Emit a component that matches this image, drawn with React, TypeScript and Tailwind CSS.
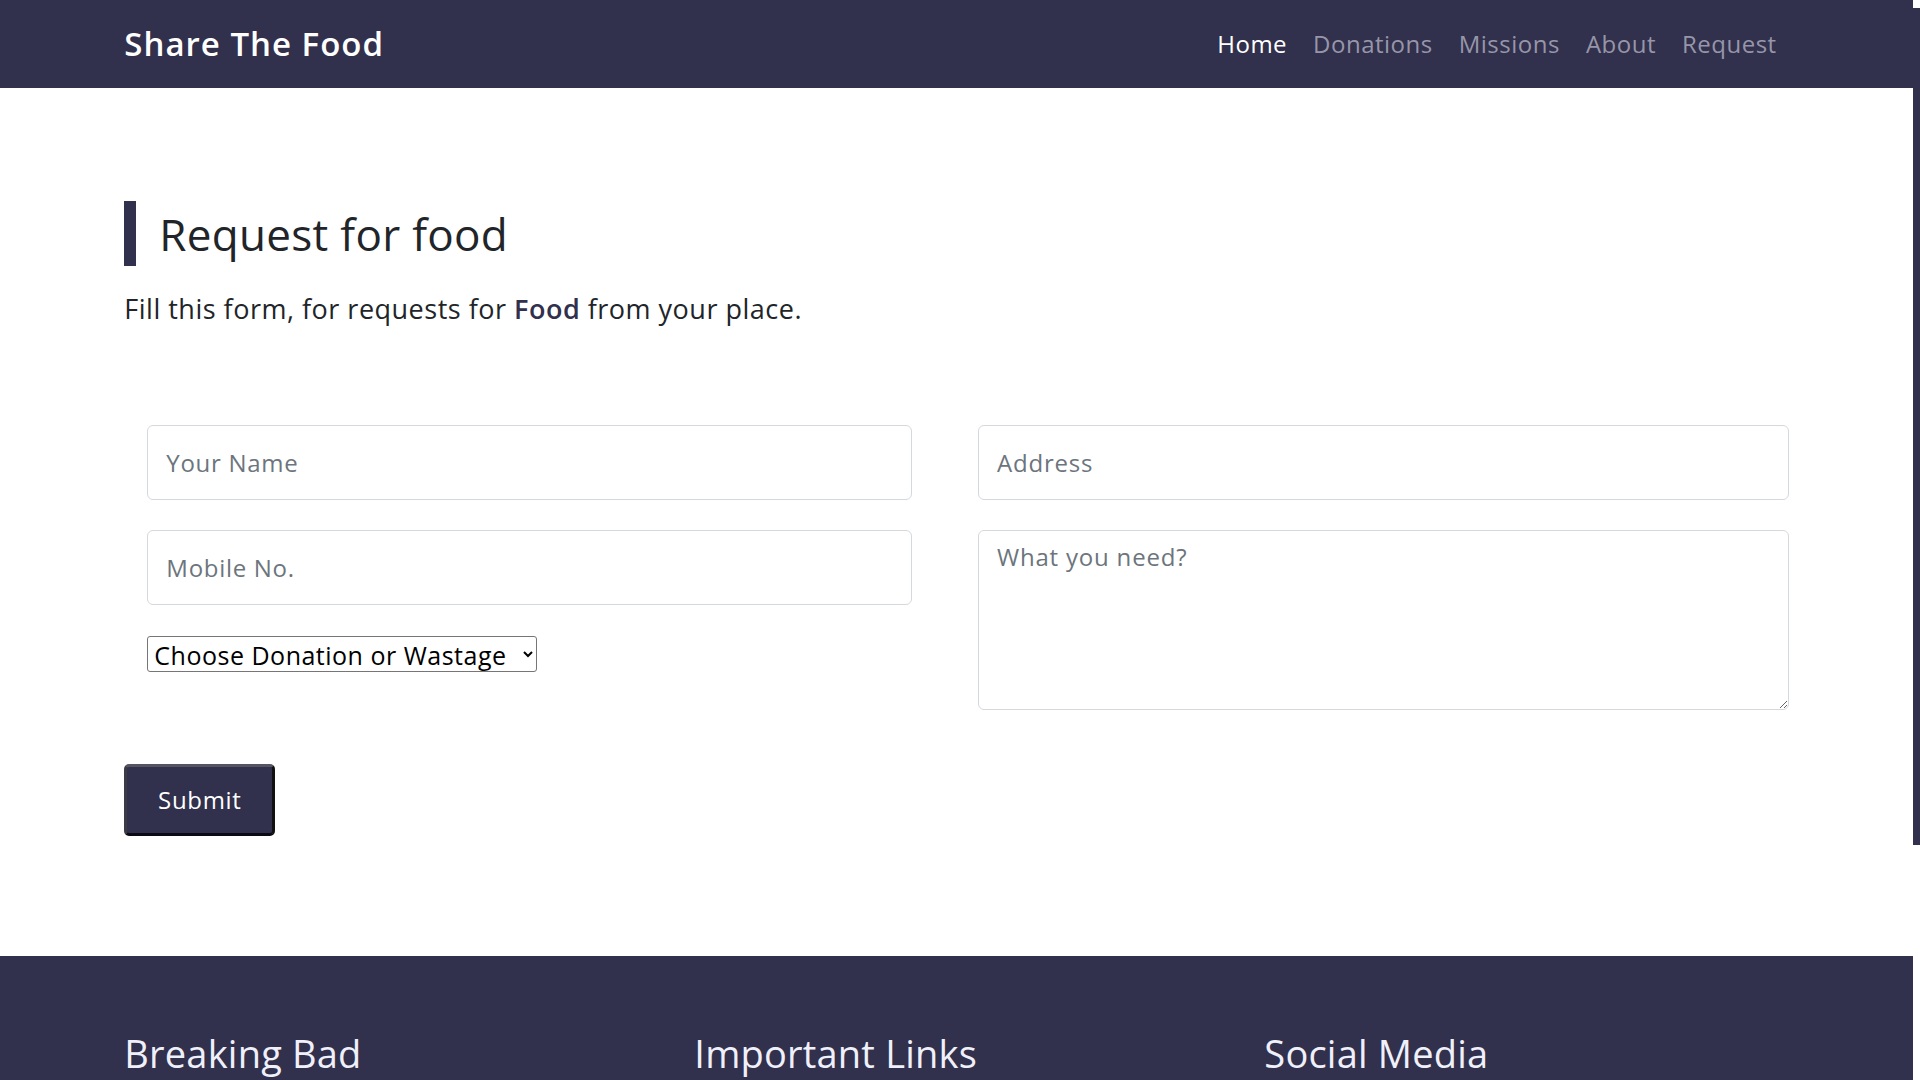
export default function App() {
  const font = { fontFamily: '"Open Sans", "Liberation Sans", sans-serif' };
  return (
    <div className="flex h-[1080px] overflow-hidden bg-white" style={font}>
      <div className="flex-1 min-w-0">
        {/* Navbar */}
        <header className="h-[88px] bg-[#31304d]">
          <div className="mx-auto flex h-full w-[87%] items-center justify-between">
            <span className="text-[33px] font-semibold tracking-[1px] text-white">Share The Food</span>
            <nav className="mr-[12px] flex items-center gap-[26px] text-[24px] tracking-[0.5px]">
              <a className="text-white">Home</a>
              <a className="text-[#9796a8]">Donations</a>
              <a className="text-[#9796a8]">Missions</a>
              <a className="text-[#9796a8]">About</a>
              <a className="text-[#9796a8]">Request</a>
            </nav>
          </div>
        </header>

        {/* Request form */}
        <main className="mx-auto w-[87%] pt-[113px] pb-[120px]">
          <div className="flex h-[65px] items-center border-l-[12px] border-[#31304d] pl-[23px]">
            <h1 className="text-[44px] leading-none tracking-[0.3px] text-[#212529]">Request for food</h1>
          </div>
          <p className="mt-[23px] text-[27px] leading-[39px] tracking-[0.5px] text-[#212529]">
            Fill this form, for requests for <b className="font-semibold text-[#31304d]">Food</b> from your place.
          </p>

          <form className="mt-[97px]">
            <div className="flex">
              <div className="ml-[23px] flex w-[765px] flex-col">
                <input
                  className="h-[75px] rounded-md border border-[#d5d8dc] px-[18px] text-[24px] tracking-[0.7px] placeholder:text-[#6c757d]"
                  placeholder="Your Name"
                />
                <input
                  className="mt-[30px] h-[75px] rounded-md border border-[#d5d8dc] px-[18px] text-[24px] tracking-[0.7px] placeholder:text-[#6c757d]"
                  placeholder="Mobile No."
                />
                <div className="mt-[31px]">
                  <select className="h-[36px] w-[390px] rounded-[3px] border border-[#767676] pl-[2px] pr-[6px] text-[25px] tracking-[0.5px] text-black">
                    <option>Choose Donation or Wastage</option>
                  </select>
                </div>
              </div>
              <div className="ml-[66px] flex w-[811px] flex-col">
                <input
                  className="h-[75px] rounded-md border border-[#d5d8dc] px-[18px] text-[24px] tracking-[0.8px] placeholder:text-[#6c757d]"
                  placeholder="Address"
                />
                <textarea
                  className="mt-[30px] h-[180px] rounded-md border border-[#d5d8dc] px-[18px] pt-[8px] text-[24px] leading-[36px] tracking-[0.8px] placeholder:text-[#6c757d]"
                  placeholder="What you need?"
                />
              </div>
            </div>
            <button
              type="button"
              className="mt-[54px] h-[72px] w-[151px] rounded-[5px] border-[3px] border-t-[#555460] border-l-[#3b3b45] border-r-[#111] border-b-[#0a0a12] bg-[#31304d] text-[24px] tracking-[0.7px] text-white"
            >
              Submit
            </button>
          </form>
        </main>

        {/* Footer */}
        <footer className="bg-[#31304d] pt-[74px] pb-[80px]">
          <div className="mx-auto grid w-[87%] grid-cols-[570px_570px_1fr] text-[38px] leading-[46px] tracking-[0.2px] text-[#f0f0fa]">
            <h3>Breaking Bad</h3>
            <h3>Important Links</h3>
            <h3>Social Media</h3>
          </div>
        </footer>
      </div>

      {/* scrollbar */}
      <div className="w-[7px] shrink-0">
        <div className="mt-[8px] h-[837px] bg-[#31304d]" />
      </div>
    </div>
  );
}
